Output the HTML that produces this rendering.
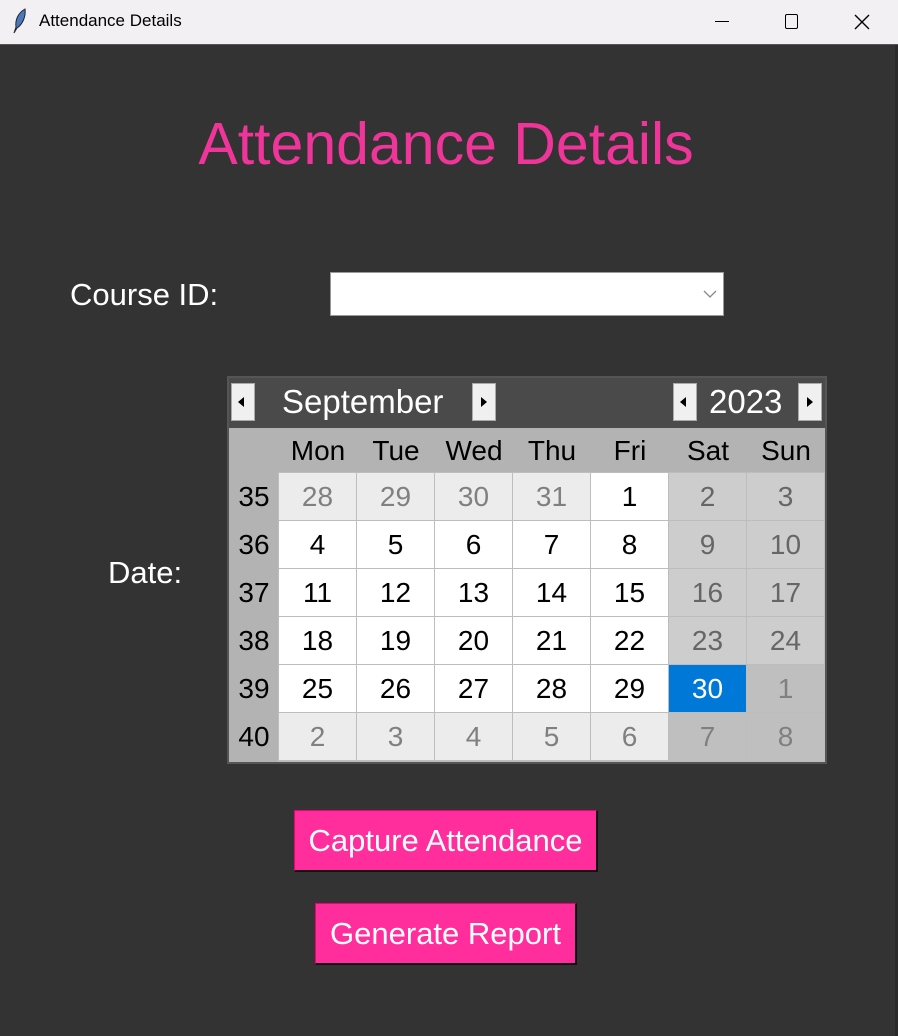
<!DOCTYPE html>
<html><head><meta charset="utf-8"><style>
*{margin:0;padding:0;box-sizing:border-box}
body{width:898px;height:1036px;background:#333;font-family:"Liberation Sans",sans-serif;position:relative;overflow:hidden}
.a{position:absolute}
.tb{left:0;top:0;width:898px;height:45px;background:#f3f0f3;border-bottom:1px solid #555}
.c{position:absolute;width:77px;height:47px;text-align:center;line-height:47px;font-size:28px}
.w{background:#fff;color:#000}.o{background:#ececec;color:#808080}.we{background:#cdcdcd;color:#666}.wo{background:#bfbfbf;color:#808080}
.hd{position:absolute;top:430px;height:42px;width:78px;text-align:center;font-size:28px;line-height:42px;color:#000}
.wk{position:absolute;left:229px;width:50px;text-align:center;font-size:28px;color:#000;line-height:48px}
.arr{position:absolute;top:383px;width:24px;height:38px;background:#f0f0f0;border:1px solid #aaa}
.btn{position:absolute;background:#ff2e9c;color:#fff;font-size:31px;text-align:center;border-right:2px solid #111;border-bottom:2px solid #111;border-left:1px solid #e07;border-top:1px solid #e07;white-space:nowrap}
</style></head><body>
<div class="a tb"></div>
<svg class="a" style="left:12px;top:8px" width="16" height="26" viewBox="0 0 16 26"><path d="M13 1 C6 5 3 12 4 19 L2 25 L5 20 C11 16 14 8 13 1Z" fill="#4a78b8" stroke="#223" stroke-width="1"/></svg>
<div class="a" style="left:39px;top:11px;font-size:17px;color:#000">Attendance Details</div>
<div class="a" style="left:715px;top:21px;width:14px;height:1px;background:#000"></div>
<div class="a" style="left:785px;top:14px;width:13px;height:15px;border:1.5px solid #000;border-radius:2px"></div>
<svg class="a" style="left:854px;top:14px" width="16" height="16"><path d="M1 1L15 15M15 1L1 15" stroke="#000" stroke-width="1.4"/></svg>

<div class="a" style="left:0;width:892px;top:110px;text-align:center;font-size:59px;color:#f0359a">Attendance Details</div>
<div class="a" style="left:70px;top:277px;font-size:31px;color:#fff">Course ID:</div>
<div class="a" style="left:330px;top:272px;width:394px;height:44px;background:#fff;border:1px solid #999"></div>
<svg class="a" style="left:703px;top:290px" width="14" height="9"><path d="M1 1L7 7L13 1" stroke="#888" fill="none" stroke-width="1.3"/></svg>
<div class="a" style="left:108px;top:555px;font-size:31px;color:#fff">Date:</div>

<div class="a" style="left:227px;top:376px;width:600px;height:388px;background:#b3b3b3;border:2px solid #555"></div>
<div class="a" style="left:229px;top:378px;width:596px;height:50px;background:#4a4a4a"></div>
<div class="arr" style="left:231px"></div><div class="a" style="left:238px;top:397px;width:0;height:0;border-top:5px solid transparent;border-bottom:5px solid transparent;border-right:6px solid #000"></div>
<div class="arr" style="left:472px"></div><div class="a" style="left:481px;top:397px;width:0;height:0;border-top:5px solid transparent;border-bottom:5px solid transparent;border-left:6px solid #000"></div>
<div class="arr" style="left:673px"></div><div class="a" style="left:680px;top:397px;width:0;height:0;border-top:5px solid transparent;border-bottom:5px solid transparent;border-right:6px solid #000"></div>
<div class="arr" style="left:798px"></div><div class="a" style="left:807px;top:397px;width:0;height:0;border-top:5px solid transparent;border-bottom:5px solid transparent;border-left:6px solid #000"></div>
<div class="a" style="left:282px;top:383px;font-size:33px;color:#fff">September</div>
<div class="a" style="left:709px;top:383px;font-size:33px;color:#fff">2023</div>

<div class="hd" style="left:279px">Mon</div><div class="hd" style="left:357px">Tue</div><div class="hd" style="left:435px">Wed</div><div class="hd" style="left:513px">Thu</div><div class="hd" style="left:591px">Fri</div><div class="hd" style="left:669px">Sat</div><div class="hd" style="left:747px">Sun</div>
<div class="a" style="left:278px;top:472px;width:547px;height:290px;background:#bdbdbd"></div>
<div class="wk" style="top:473px">35</div><div class="wk" style="top:521px">36</div><div class="wk" style="top:569px">37</div><div class="wk" style="top:617px">38</div><div class="wk" style="top:665px">39</div><div class="wk" style="top:713px">40</div>

<div class="c o" style="left:279px;top:473px">28</div><div class="c o" style="left:357px;top:473px">29</div><div class="c o" style="left:435px;top:473px">30</div><div class="c o" style="left:513px;top:473px">31</div><div class="c w" style="left:591px;top:473px">1</div><div class="c we" style="left:669px;top:473px">2</div><div class="c we" style="left:747px;top:473px">3</div>

<div class="c w" style="left:279px;top:521px">4</div><div class="c w" style="left:357px;top:521px">5</div><div class="c w" style="left:435px;top:521px">6</div><div class="c w" style="left:513px;top:521px">7</div><div class="c w" style="left:591px;top:521px">8</div><div class="c we" style="left:669px;top:521px">9</div><div class="c we" style="left:747px;top:521px">10</div>

<div class="c w" style="left:279px;top:569px">11</div><div class="c w" style="left:357px;top:569px">12</div><div class="c w" style="left:435px;top:569px">13</div><div class="c w" style="left:513px;top:569px">14</div><div class="c w" style="left:591px;top:569px">15</div><div class="c we" style="left:669px;top:569px">16</div><div class="c we" style="left:747px;top:569px">17</div>

<div class="c w" style="left:279px;top:617px">18</div><div class="c w" style="left:357px;top:617px">19</div><div class="c w" style="left:435px;top:617px">20</div><div class="c w" style="left:513px;top:617px">21</div><div class="c w" style="left:591px;top:617px">22</div><div class="c we" style="left:669px;top:617px">23</div><div class="c we" style="left:747px;top:617px">24</div>

<div class="c w" style="left:279px;top:665px">25</div><div class="c w" style="left:357px;top:665px">26</div><div class="c w" style="left:435px;top:665px">27</div><div class="c w" style="left:513px;top:665px">28</div><div class="c w" style="left:591px;top:665px">29</div><div class="c" style="left:669px;top:665px;background:#0078d7;color:#fff">30</div><div class="c wo" style="left:747px;top:665px">1</div>

<div class="c o" style="left:279px;top:713px">2</div><div class="c o" style="left:357px;top:713px">3</div><div class="c o" style="left:435px;top:713px">4</div><div class="c o" style="left:513px;top:713px">5</div><div class="c o" style="left:591px;top:713px">6</div><div class="c wo" style="left:669px;top:713px">7</div><div class="c wo" style="left:747px;top:713px">8</div>

<div class="btn" style="left:294px;top:810px;width:304px;height:62px;line-height:59px">Capture Attendance</div>
<div class="btn" style="left:315px;top:903px;width:262px;height:62px;line-height:59px">Generate Report</div>
<div class="a" style="left:895px;top:45px;width:3px;height:991px;background:#2a2a2a"></div>
</body></html>
